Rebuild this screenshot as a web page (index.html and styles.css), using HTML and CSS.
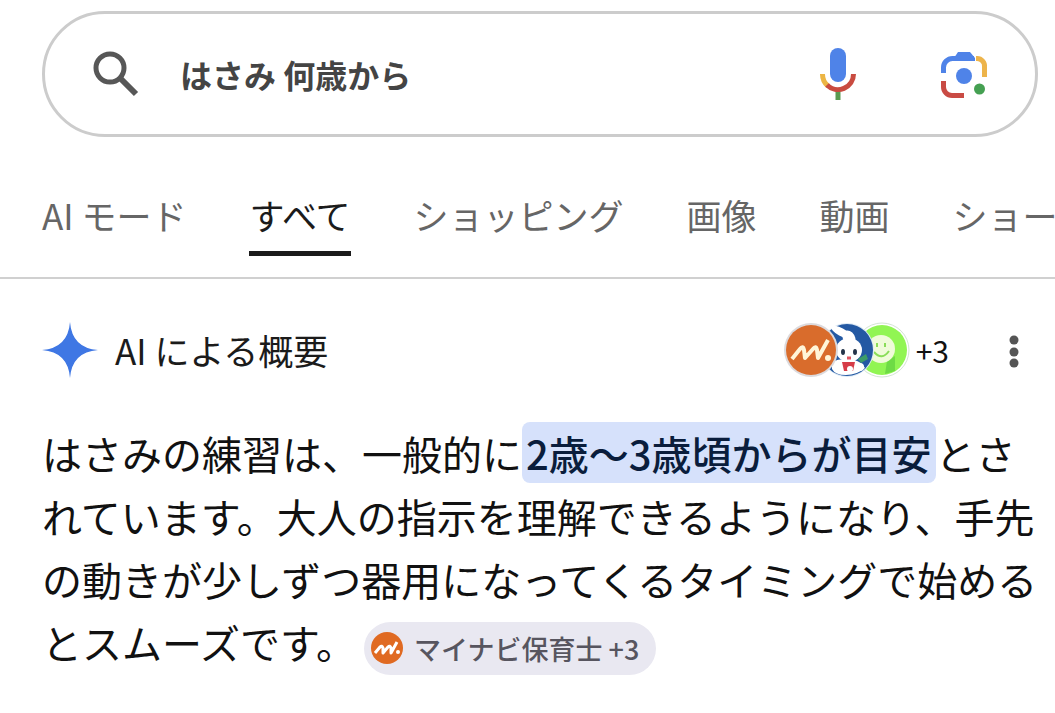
FILE: index.html
```
<!DOCTYPE html>
<html lang="ja">

<head>
    <meta charset="UTF-8">
    <meta name="viewport" content="width=device-width, initial-scale=1.0">
    <title>はさみ 何歳から</title>
    <link rel="stylesheet" href="styles.css">
</head>

<body>
    <header>
        <form class="search" role="search">
            <button type="submit" class="icon-btn" aria-label="検索">
                <svg width="48" height="48" viewBox="0 0 48 48" fill="none" stroke="#575757">
                    <circle cx="18" cy="18" r="14" stroke-width="5" />
                    <path d="M28 28L44 44" stroke-width="6" />
                </svg>
            </button>
            <input type="text" class="search-input" name="q" value="はさみ 何歳から" aria-label="検索キーワード">
            <button type="button" class="icon-btn mic" aria-label="音声検索">
                <svg width="38" height="54" viewBox="0 0 38 54" fill="none" stroke-width="5">
                    <path d="M18 42v11" stroke="#5a9a50" />
                    <path d="M2.500 27A15.500 15.500 0 0 0 8 39" stroke="#ecb544" />
                    <path d="M7 38A15.500 15.500 0 0 0 33.500 27" stroke="#c94b40" />
                    <rect x="10" y="1" width="16" height="34" rx="8" fill="#4f83e8" />
                </svg>
            </button>
            <button type="button" class="icon-btn lens" aria-label="画像で検索">
                <svg width="48" height="48" viewBox="0 0 48 48" fill="none" stroke-width="5">
                    <path d="M36 8.500h1a7.500 7.500 0 0 1 7.500 8.500v10" stroke="#edb44b" />
                    <path d="M3.500 23v-5.500a9 9 0 0 1 9-9H34" stroke="#4f83e8" />
                    <path d="M14 8l4-6h12l5 6v3H14z" fill="#4f83e8" />
                    <path d="M3.500 31v6a8.500 8.500 0 0 0 8.500 8.500h12" stroke="#c94b44" />
                    <circle cx="24" cy="26" r="8" fill="#4f83e8" />
                    <circle cx="39.500" cy="39" r="5.500" fill="#45a052" />
                </svg>
            </button>
        </form>

        <nav class="tabs">
            <a href="#">AI モード</a>
            <a href="#" class="active" aria-current="page">すべて</a>
            <a href="#">ショッピング</a>
            <a href="#">画像</a>
            <a href="#">動画</a>
            <a href="#">ショート動画</a>
        </nav>
    </header>

    <main>
        <div class="overview-head">
            <svg class="spark" width="56" height="56" viewBox="0 0 56 56">
                <path d="M28 0Q30 26 56 28Q30 30 28 56Q26 30 0 28Q26 26 28 0Z" fill="#3f77e4" />
                <path d="M28 6C31 18 38 25 50 28C38 31 31 38 28 50C25 38 18 31 6 28C18 25 25 18 28 6Z" fill="#3f77e4" />
            </svg>
            <h1>AI による概要</h1>
            <button type="button" class="sources" aria-label="参照元を表示">
                <svg width="126" height="56" viewBox="0 0 126 56">
                    <!-- 黄緑のスマイル -->
                    <circle cx="98" cy="28" r="27" fill="#fff" stroke="#d4e4d4" />
                    <circle cx="98" cy="28" r="25" fill="#91f553" />
                    <path d="M103 39l8-5v15l-10 3z" fill="#6edb45" />
                    <circle cx="97" cy="27" r="14" fill="#effbd9" />
                    <g fill="none" stroke="#8add58" stroke-width="2">
                        <path d="M93 21v4M101 21v4M90 30q8 9 15-1" />
                    </g>
                    <!-- 青地のうさぎ -->
                    <circle cx="63" cy="28" r="27" fill="#dce9f5" />
                    <circle cx="63" cy="28" r="26" fill="#2459a3" />
                    <ellipse cx="57" cy="10" rx="11" ry="4" transform="rotate(28 57 10)" fill="#fff" />
                    <ellipse cx="65" cy="16" rx="6" ry="8" transform="rotate(-30 65 16)" fill="#fff" />
                    <path d="M48 41q5-5 13-3h9q8 2 11 8-8 7-19 7t-14-6z" fill="#fff" />
                    <ellipse cx="65" cy="28" rx="13" ry="12" fill="#fff" />
                    <ellipse cx="59" cy="30" rx="2" ry="3" fill="#243449" />
                    <ellipse cx="71" cy="30" rx="2" ry="3" fill="#243449" />
                    <path d="M63 36h4" stroke="#e05560" stroke-width="3" />
                    <path d="M58 40h13l-2 9h-9z" fill="#d63c48" />
                    <path d="M74 37l8-5 2 5-7 4z" fill="#3c9b68" />
                    <circle cx="66" cy="47" r="3" fill="#fff" />
                    <circle cx="76" cy="45" r="4" fill="#fff" />
                    <!-- オレンジの波線 -->
                    <circle cx="27" cy="28" r="27" fill="#dcdadd" />
                    <circle cx="27" cy="28" r="25" fill="#d96c2c" />
                    <path d="M8 37L16 27Q19 23 20 28L21 36L29 27Q32 23 33 28L34 36L44 18" fill="none" stroke="#fff5d8" stroke-width="4" stroke-linejoin="round" />
                    <circle cx="44" cy="36" r="3" fill="#fff5d8" />
                </svg>
                <span>+3</span>
            </button>
            <button type="button" class="icon-btn more" aria-label="その他">
                <svg width="10" height="36" viewBox="0 0 10 36" fill="#555">
                    <circle cx="5" cy="8" r="4.500" />
                    <circle cx="5" cy="20" r="4.500" />
                    <circle cx="5" cy="31" r="4.500" />
                </svg>
            </button>
        </div>

        <p class="answer">はさみの練習は、一般的に<mark>2歳～3歳頃からが目安</mark>とされています。大人の指示を理解できるようになり、手先の動きが少しずつ器用になってくるタイミングで始めるとスムーズです。<button type="button" class="chip">
            <svg width="32" height="32" viewBox="0 0 32 32">
                <circle cx="16" cy="16" r="16" fill="#e06a22" />
                <path d="M4 21L9 15Q11 13 12 16L12 21L17 15Q19 13 20 16L20 21L26 10" fill="none" stroke="#fff" stroke-width="3" stroke-linejoin="round" />
                <circle cx="27" cy="20" r="2" fill="#fff" />
            </svg>
            <span>マイナビ保育士 +3</span>
        </button></p>
    </main>
</body>

</html>
```
FILE: styles.css
```
* {
    box-sizing: border-box;
}

body {
    margin: 0;
    background-color: #fff;
    color: #111;
    font-family: "Noto Sans CJK JP", sans-serif;
    overflow-x: hidden;
}

button {
    padding: 0;
    border: none;
    background: none;
    color: inherit;
    font-family: inherit;
    cursor: pointer;
}

svg {
    display: block;
    flex-shrink: 0;
}

/* 検索ボックス */
.search {
    display: flex;
    align-items: center;
    height: 126px;
    margin: 11px 17px 0 42px;
    padding: 0 47px;
    border: 3px solid #ccc;
    border-radius: 63px;
}

.search-input {
    flex: 1;
    min-width: 0;
    margin-left: 40px;
    padding: 0;
    border: none;
    outline: none;
    background: none;
    color: #444;
    font-family: inherit;
    font-size: 32px;
    font-weight: 700;
}

.lens {
    margin-left: 82px;
}

/* タブ */
.tabs {
    display: flex;
    gap: 63px;
    height: 142px;
    padding: 52px 0 0 42px;
    border-bottom: 2px solid #d0d0d0;
    overflow: hidden;
}

.tabs a {
    flex-shrink: 0;
    height: 67px;
    color: #666;
    font-size: 35px;
    line-height: 52px;
    text-decoration: none;
    white-space: nowrap;
}

.tabs .active {
    color: #1b1b1b;
    border-bottom: 5px solid #1b1b1b;
}

/* AI による概要 */
main {
    padding: 43px 14px 32px 42px;
}

.overview-head {
    display: flex;
    align-items: center;
    height: 56px;
}

h1 {
    flex: 1;
    margin: 0 0 0 17px;
    color: #1b1b1b;
    font-size: 35px;
    font-weight: 400;
    line-height: 60px;
}

.sources {
    display: flex;
    align-items: center;
    gap: 6px;
    font-size: 30px;
}

.more {
    margin: 0 22px 0 60px;
}

.answer {
    margin: 44px 0 0;
    font-size: 40px;
    line-height: 63px;
}

mark {
    padding: 2px 4px 1px;
    border-radius: 8px;
    background-color: #d6e1fb;
    color: #0a1d3c;
    font-weight: 500;
}

.chip {
    display: inline-flex;
    align-items: center;
    gap: 11px;
    height: 53px;
    margin-left: 8px;
    padding: 0 17px 0 7px;
    border-radius: 27px;
    background-color: #e9e8f1;
    color: #57555f;
    font-size: 27px;
    font-weight: 500;
    vertical-align: middle;
}
```
